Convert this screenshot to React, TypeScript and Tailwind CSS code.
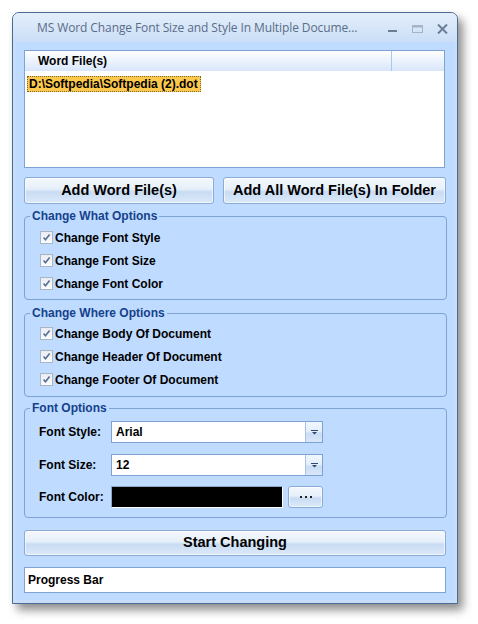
import React from 'react';

const font = "font-['Liberation_Sans',Arial,sans-serif]";

const Check: React.FC<{ label: string }> = ({ label }) => (
  <div className="flex h-[23px] items-center pl-[15px]">
    <span className="flex h-[13px] w-[13px] items-center justify-center border border-[#a9b4c4] bg-linear-to-b from-[#e9edf2] to-[#fbfcfd]">
      <svg width="9" height="9" viewBox="0 0 9 9">
        <path d="M1.5 4.5 L3.5 6.8 L7.6 1.6" fill="none" stroke="#5a6f92" strokeWidth="1.6" />
      </svg>
    </span>
    <span className="ml-[2px] text-[12px] font-bold text-black">{label}</span>
  </div>
);

const Group: React.FC<{ title: string; className?: string; children: React.ReactNode }> = ({
  title,
  className = '',
  children,
}) => (
  <fieldset className={`rounded-[4px] border border-[#7ea2d4] ${className}`}>
    <legend className="ml-[5px] px-[2px] text-[12px] font-bold leading-[14px] text-[#15428b]">{title}</legend>
    {children}
  </fieldset>
);

const btn =
  'rounded-[3px] border border-[#8aabd8] bg-[linear-gradient(#f4f8fd_0%,#e6eff9_45%,#c9dcf4_55%,#dce9f8_100%)] font-bold text-black shadow-[inset_0_0_0_1px_rgba(255,255,255,0.6)]';

const Combo: React.FC<{ value: string }> = ({ value }) => (
  <div className="flex h-[22px] w-[212px] border border-[#7ea2d4] bg-white">
    <div className="flex flex-1 items-center pl-[4px] text-[12px] font-bold text-black">{value}</div>
    <div className="flex w-[17px] items-center justify-center border-l border-[#a9c3e6] bg-[linear-gradient(#f2f7fd_0%,#e3edf9_50%,#c9dcf3_55%,#d9e7f8_100%)]">
      <svg width="7" height="5" viewBox="0 0 7 5">
        <rect x="0" y="0" width="7" height="1" fill="#2c4a78" />
        <path d="M1 2 L6 2 L3.5 4.5 Z" fill="#2c4a78" />
      </svg>
    </div>
  </div>
);

export default function App() {
  return (
    <div className={`h-[624px] w-[478px] overflow-hidden bg-white pl-[12px] pt-[12px] ${font}`}>
      <div className="relative flex h-[592px] w-[446px] flex-col rounded-t-[7px] border border-[#4b6a94] bg-[#c8ddf7] shadow-[5px_6px_10px_rgba(0,0,0,0.45)]">
        {/* Title bar */}
        <div className="flex h-[29px] shrink-0 items-center rounded-t-[6px] bg-linear-to-b from-[#e4eefa] to-[#cadff7] pl-[24px] pr-[9px]">
          <span className="flex-1 font-['Open_Sans',sans-serif] text-[12px] tracking-[-0.1px] text-[#5a6c88]">
            MS Word Change Font Size and Style In Multiple Docume...
          </span>
          <div className="flex items-center gap-[14px] pt-[2px]">
            <svg width="11" height="10" viewBox="0 0 11 10">
              <rect x="1" y="6" width="9" height="2" fill="#6b7c98" />
            </svg>
            <svg width="11" height="10" viewBox="0 0 11 10">
              <rect x="0.5" y="1.5" width="10" height="7" fill="none" stroke="#a5b3c8" />
              <rect x="0.5" y="1.5" width="10" height="2" fill="#a5b3c8" />
            </svg>
            <svg width="11" height="10" viewBox="0 0 11 10">
              <path d="M1 0.5 L10 9.5 M10 0.5 L1 9.5" stroke="#6b7c98" strokeWidth="2" />
            </svg>
          </div>
        </div>

        {/* Client area */}
        <div className="mx-[3px] mb-[3px] flex flex-1 flex-col bg-[#bfdbff] px-[8px] pt-[8px]">
          {/* List view */}
          <div className="h-[118px] w-[421px] border border-[#7ea2d4] bg-white">
            <div className="flex h-[20px] bg-linear-to-b from-[#ffffff] to-[#d8e6fa]">
              <div className="flex w-[367px] items-center border-r border-[#a9c8f0] pl-[13px] text-[12px] font-bold text-black">
                Word File(s)
              </div>
            </div>
            <div className="ml-[2px] mt-[1px] inline-flex h-[16px] items-center border border-dotted border-[#7a6a30] bg-[#fdc94c] pl-[1px] pr-[2px] text-[12px] font-bold text-black">
              D:\Softpedia\Softpedia (2).dot
            </div>
          </div>

          {/* Add buttons */}
          <div className="mt-[9px] flex gap-[9px]">
            <button className={`${btn} h-[27px] w-[190px] text-[14.5px]`}>Add Word File(s)</button>
            <button className={`${btn} h-[27px] w-[223px] text-[14.5px]`}>Add All Word File(s) In Folder</button>
          </div>

          <Group title="Change What Options" className="mt-[5px] w-[423px]">
            <div className="pb-[4px] pt-[3px]">
              <Check label="Change Font Style" />
              <Check label="Change Font Size" />
              <Check label="Change Font Color" />
            </div>
          </Group>

          <Group title="Change Where Options" className="mt-[6px] w-[423px]">
            <div className="pb-[5px] pt-[2px]">
              <Check label="Change Body Of Document" />
              <Check label="Change Header Of Document" />
              <Check label="Change Footer Of Document" />
            </div>
          </Group>

          <Group title="Font Options" className="mt-[4px] w-[423px]">
            <div className="flex flex-col pb-[9px] pl-[14px] pt-[6px] text-[12px] font-bold text-black">
              <div className="flex items-center">
                <span className="w-[72px]">Font Style:</span>
                <Combo value="Arial" />
              </div>
              <div className="mt-[11px] flex items-center">
                <span className="w-[72px]">Font Size:</span>
                <Combo value="12" />
              </div>
              <div className="mt-[10px] flex items-center">
                <span className="w-[72px]">Font Color:</span>
                <div className="h-[22px] w-[172px] border border-b-white border-l-[#8aa5cc] border-r-white border-t-[#8aa5cc] bg-black" />
                <button className={`${btn} ml-[5px] flex h-[22px] w-[35px] items-center justify-center`}>
                  <svg width="14" height="3" viewBox="0 0 14 3">
                    <rect x="1" y="0" width="2" height="2" fill="#222" />
                    <rect x="6" y="0" width="2" height="2" fill="#222" />
                    <rect x="11" y="0" width="2" height="2" fill="#222" />
                  </svg>
                </button>
              </div>
            </div>
          </Group>

          <button className={`${btn} mt-[12px] h-[26px] w-[422px] text-[14.5px]`}>Start Changing</button>

          <div className="mt-[11px] flex h-[26px] w-[422px] items-center border border-[#7ea2d4] bg-white pl-[3px] text-[12px] font-bold text-black">
            Progress Bar
          </div>
        </div>
      </div>
    </div>
  );
}
